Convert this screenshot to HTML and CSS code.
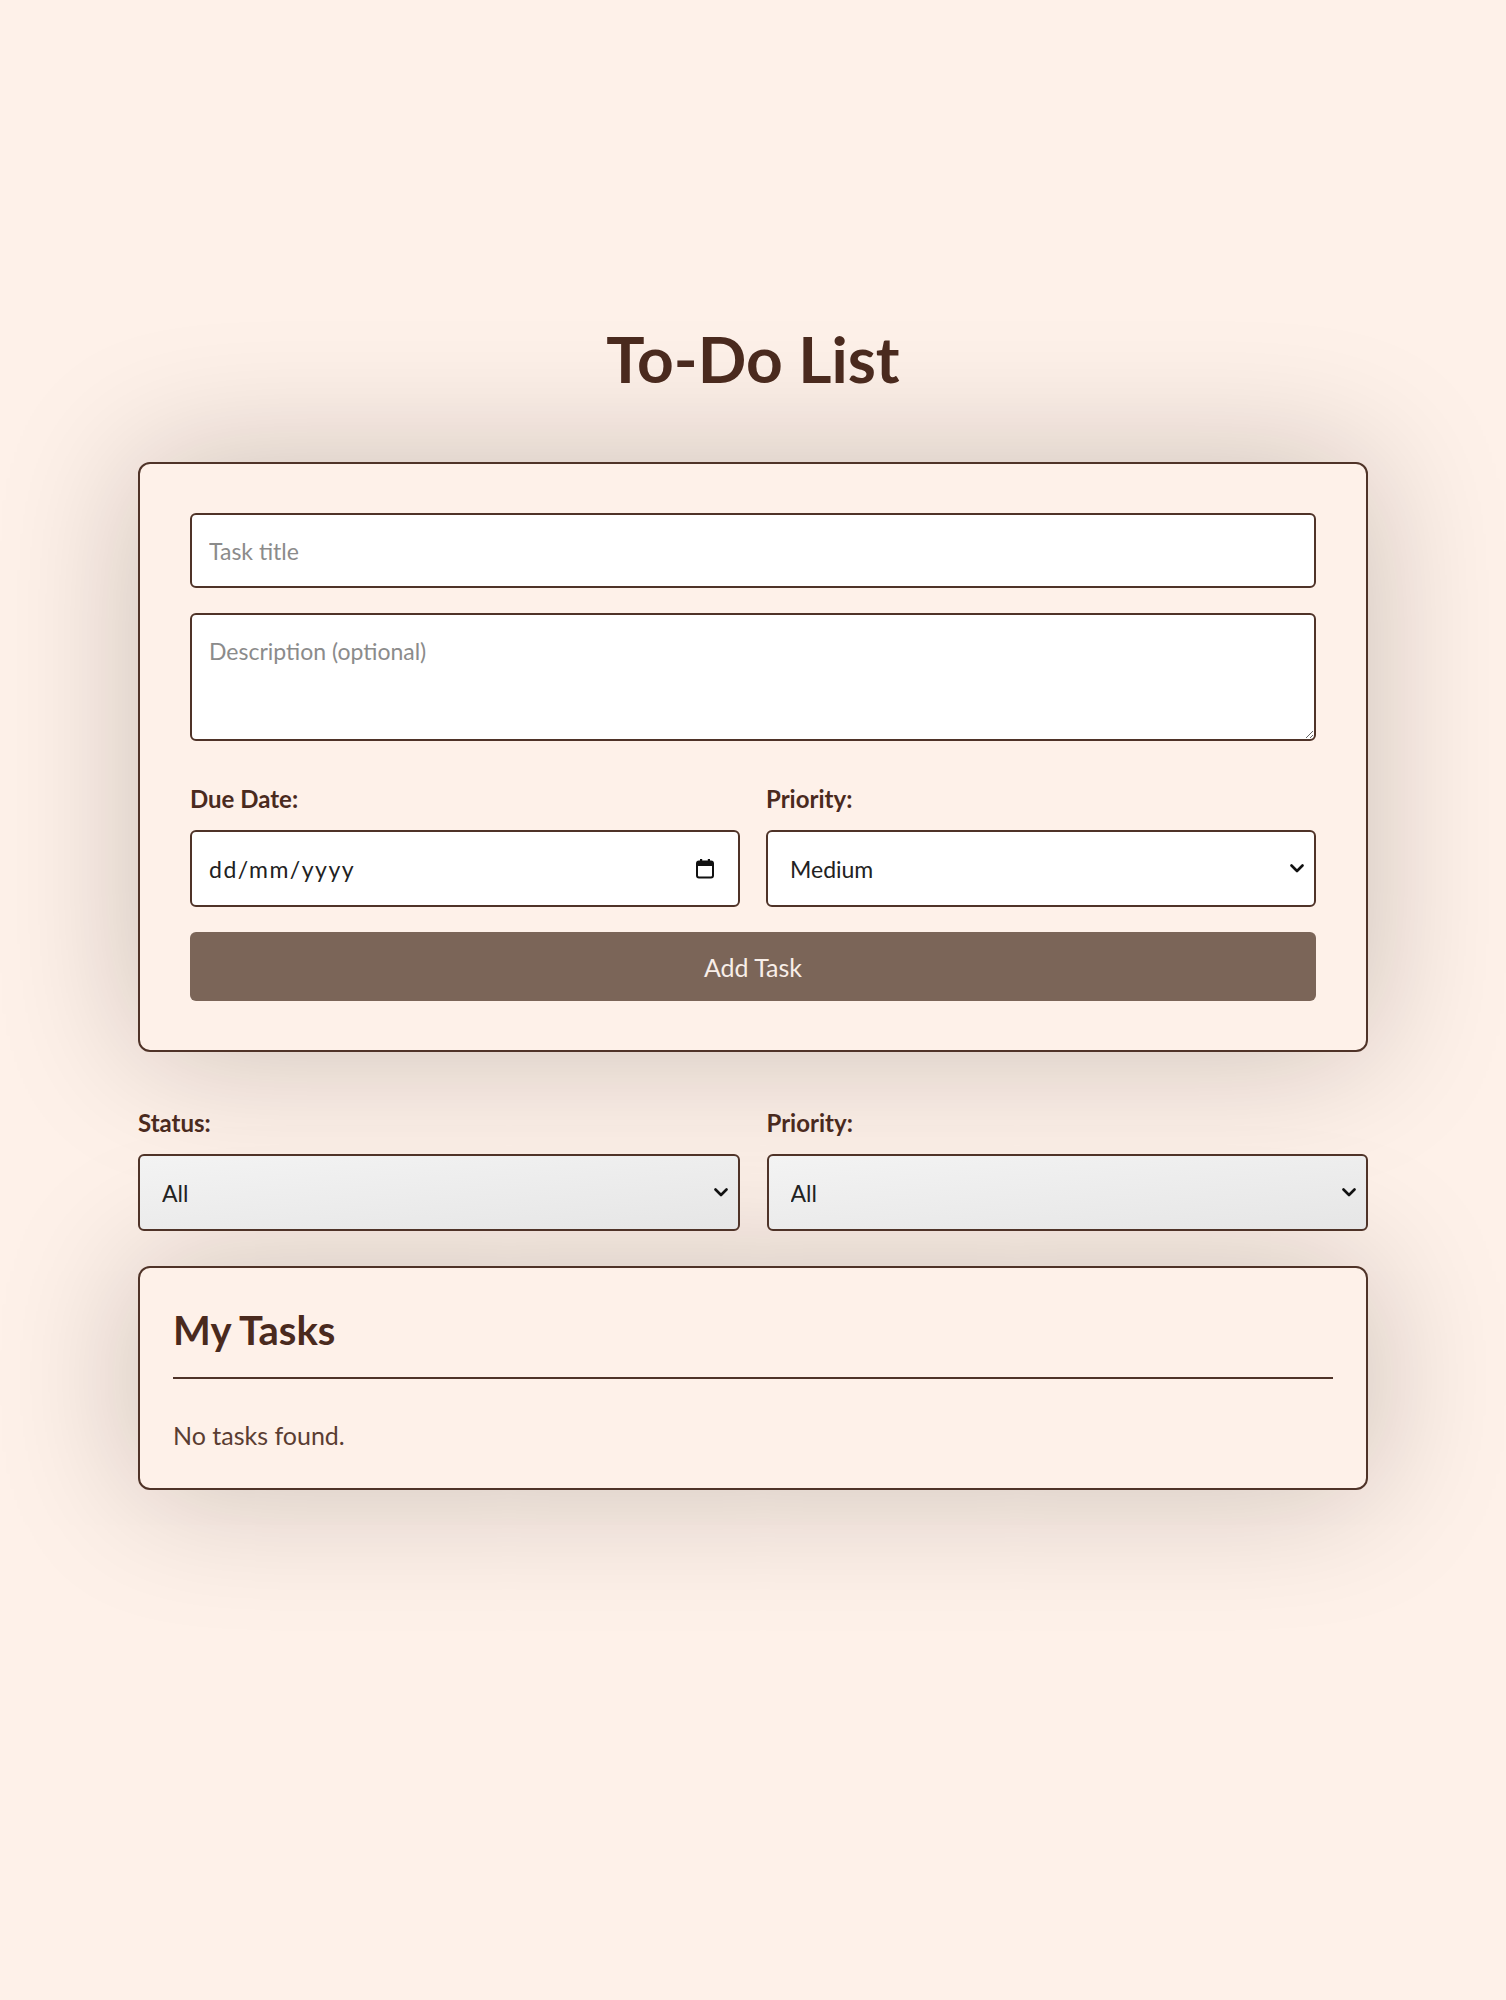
FILE: index.html
```html
<!DOCTYPE html>
<html lang="en-GB">
<head>
<meta charset="utf-8">
<title>To-Do List</title>
<link rel="stylesheet" href="styles.css">
</head>
<body>
  <main class="app">
    <h1 class="app-title">To-Do List</h1>

    <form class="card task-form">
      <input class="field" type="text" placeholder="Task title">
      <textarea class="field field-area" placeholder="Description (optional)"></textarea>
      <div class="form-row">
        <div class="form-group">
          <label class="label" for="due">Due Date:</label>
          <div class="field field-date">
            <input class="date-input" id="due" type="text" placeholder="dd/mm/yyyy">
            <svg class="date-icon" width="20" height="22" viewBox="0 0 20 22" aria-hidden="true">
              <rect x="5" y="1" width="2.2" height="4" fill="#111"/>
              <rect x="12.8" y="1" width="2.2" height="4" fill="#111"/>
              <rect x="2" y="3.5" width="16" height="16" rx="2" fill="none" stroke="#111" stroke-width="2"/>
              <rect x="2" y="3.5" width="16" height="4.5" fill="#111"/>
            </svg>
          </div>
        </div>
        <div class="form-group">
          <label class="label" for="prio">Priority:</label>
          <select class="field select" id="prio">
            <option>Low</option>
            <option selected>Medium</option>
            <option>High</option>
          </select>
        </div>
      </div>
      <button class="btn-add" type="button">Add Task</button>
    </form>

    <div class="filters">
      <div class="form-group">
        <label class="label" for="fstatus">Status:</label>
        <select class="field select filter-select" id="fstatus">
          <option>All</option>
          <option>Completed</option>
          <option>Pending</option>
        </select>
      </div>
      <div class="form-group">
        <label class="label" for="fprio">Priority:</label>
        <select class="field select filter-select" id="fprio">
          <option>All</option>
          <option>Low</option>
          <option>Medium</option>
          <option>High</option>
        </select>
      </div>
    </div>

    <section class="card tasks">
      <h2 class="tasks-title">My Tasks</h2>
      <p class="tasks-empty">No tasks found.</p>
    </section>
  </main>
</body>
</html>
```

FILE: styles.css
```css
* {
  box-sizing: border-box;
}

html, body {
  margin: 0;
  padding: 0;
}

body {
  background: #fef1e9;
  color: #4a2a1e;
  font-family: "Lato", "Noto Sans", sans-serif;
}

.app {
  width: 1230px;
  margin: 0 auto;
  padding-top: 320px;
  padding-bottom: 200px;
}

.app-title {
  margin: 0 0 65px;
  font-size: 64px;
  line-height: 77px;
  font-weight: 700;
  text-align: center;
  color: #4a2a1e;
}

.card {
  background: #fef1e9;
  border: 2px solid #4f3328;
  border-radius: 12px;
  box-shadow: 0 0 140px rgba(20, 12, 10, 0.22);
}

.task-form {
  display: flex;
  flex-direction: column;
  gap: 25px;
  padding: 49px 50px;
}

.field {
  display: block;
  width: 100%;
  height: 75px;
  padding: 0 17px;
  border: 2px solid #4f3328;
  border-radius: 6px;
  background: #ffffff;
  font-family: "Lato", "Noto Sans", sans-serif;
  font-size: 23px;
  color: #222222;
}

.field::placeholder {
  color: #8b8b8b;
}

.field-area {
  height: 128px;
  padding: 22px 17px 16px;
  resize: vertical;
}

.form-row {
  display: grid;
  grid-template-columns: 1fr 1fr;
  gap: 26px;
  margin-top: 18px;
}

.form-group {
  display: flex;
  flex-direction: column;
  gap: 17px;
}

.form-group .field {
  height: 77px;
}

.label {
  font-size: 24px;
  line-height: 29px;
  font-weight: 700;
  color: #4a2a1e;
}

.field-date {
  display: flex;
  align-items: center;
  gap: 12px;
  padding: 0 23px 0 17px;
}

.date-input {
  flex: 1;
  min-width: 0;
  border: none;
  outline: none;
  padding: 0;
  background: transparent;
  font-family: "Lato", "Noto Sans", sans-serif;
  font-size: 23px;
  letter-spacing: 1.5px;
  color: #222222;
}

.date-input::placeholder {
  color: #222222;
}

.date-icon {
  flex: none;
}

.select {
  appearance: none;
  -webkit-appearance: none;
  padding: 0 40px 0 22px;
  background-image: url("data:image/svg+xml,%3Csvg xmlns='http://www.w3.org/2000/svg' width='14' height='9' viewBox='0 0 14 9'%3E%3Cpath d='M1.5 1.5 L7 7 L12.5 1.5' fill='none' stroke='%23111' stroke-width='2.6' stroke-linecap='round' stroke-linejoin='round'/%3E%3C/svg%3E");
  background-repeat: no-repeat;
  background-position: right 10px center;
  background-size: 14px 9px;
}

.filter-select {
  background-image: url("data:image/svg+xml,%3Csvg xmlns='http://www.w3.org/2000/svg' width='14' height='9' viewBox='0 0 14 9'%3E%3Cpath d='M1.5 1.5 L7 7 L12.5 1.5' fill='none' stroke='%23111' stroke-width='2.6' stroke-linecap='round' stroke-linejoin='round'/%3E%3C/svg%3E"), linear-gradient(175deg, #f3f3f3, #e6e6e6);
  background-repeat: no-repeat, no-repeat;
  background-position: right 10px center, 0 0;
  background-size: 14px 9px, 100% 100%;
}

.btn-add {
  height: 69px;
  border: none;
  border-radius: 6px;
  background: #7b6558;
  color: #f8eee8;
  font-family: "Lato", "Noto Sans", sans-serif;
  font-size: 25px;
  cursor: pointer;
}

.filters {
  display: grid;
  grid-template-columns: 1fr 1fr;
  gap: 27px;
  margin-top: 56px;
}

.tasks {
  margin-top: 35px;
  padding: 38px 33px 38px;
}

.tasks-title {
  margin: 0;
  padding-bottom: 23px;
  border-bottom: 2px solid #4f3328;
  font-size: 40px;
  line-height: 48px;
  font-weight: 700;
  color: #4a2a1e;
}

.tasks-empty {
  margin: 41px 0 0;
  font-size: 25px;
  line-height: 30px;
  color: #5a3d32;
}
```
